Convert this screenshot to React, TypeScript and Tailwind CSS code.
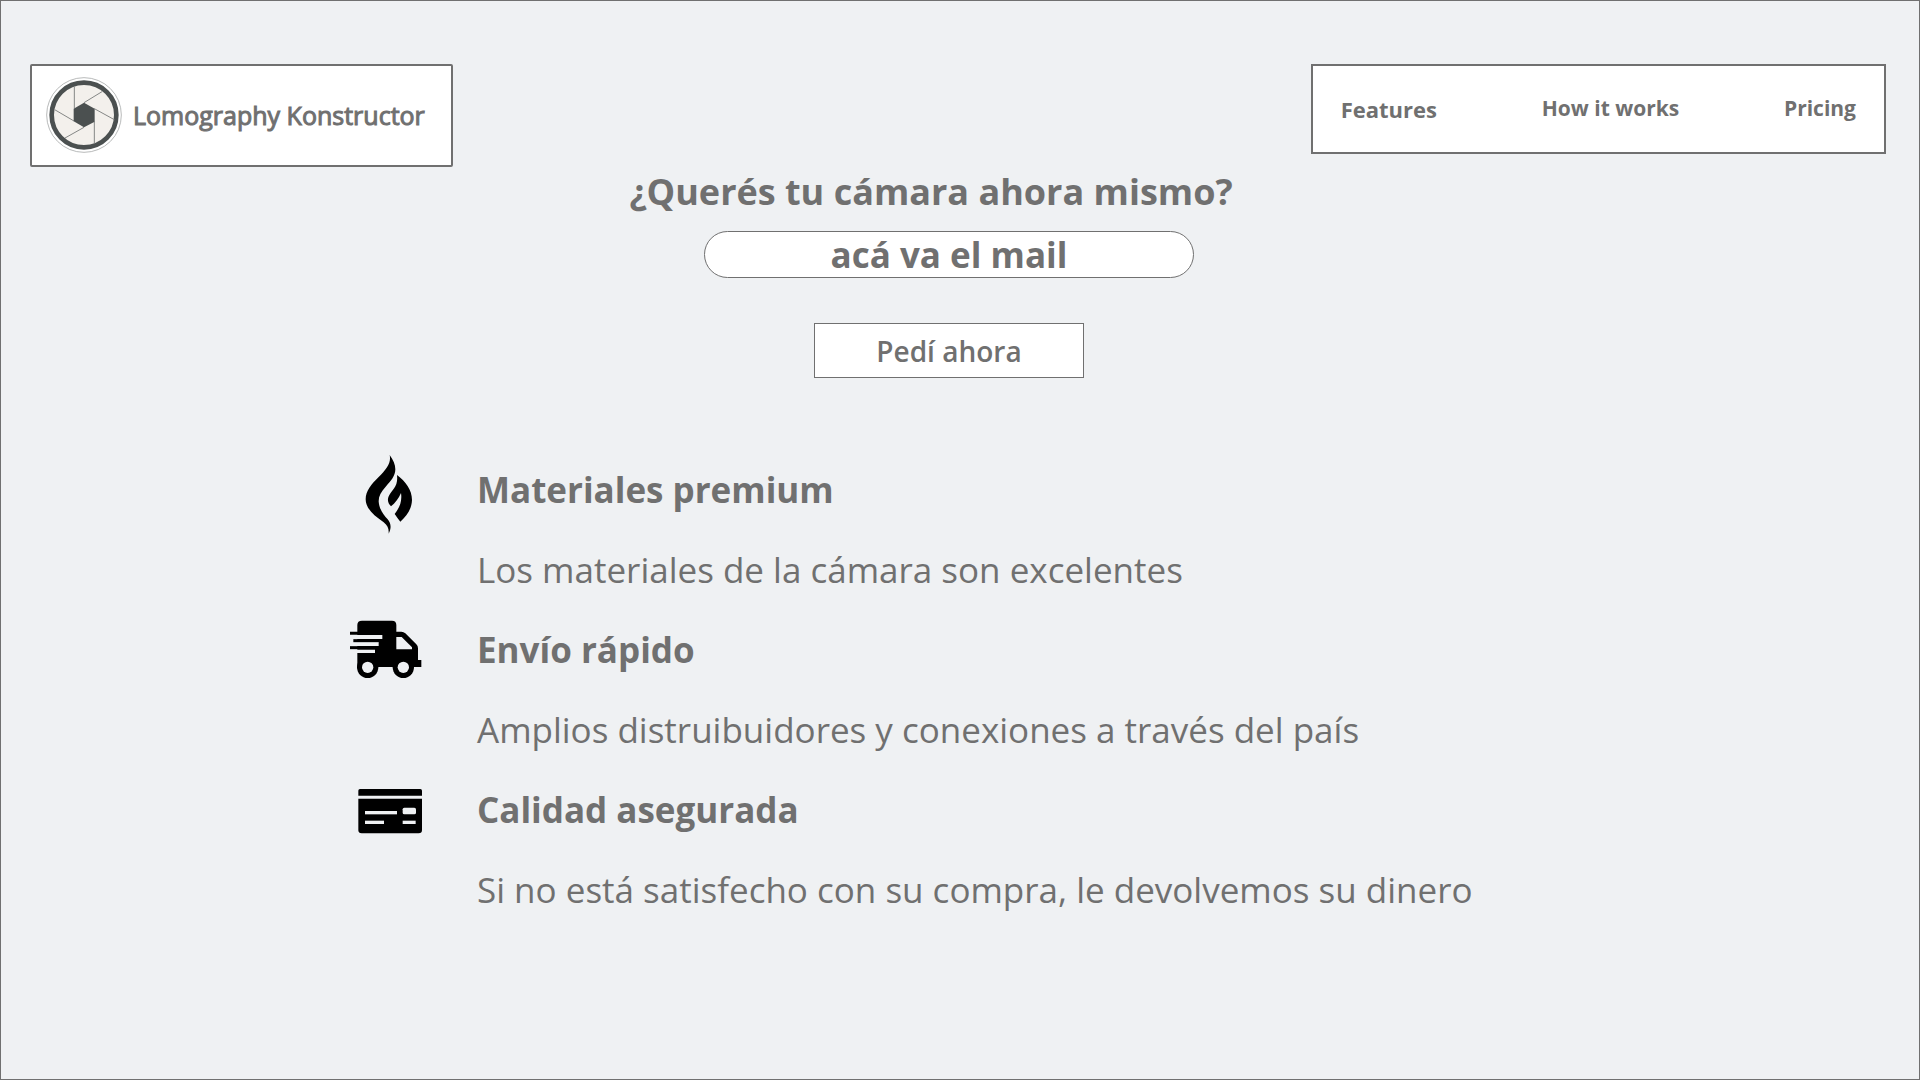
import React from "react";

function ShutterLogo() {
  return (
    <svg viewBox="0 0 228 228" className="size-[76px] shrink-0" aria-hidden="true">
      <circle cx="114" cy="114" r="112" fill="#fff" stroke="#a9acac" strokeWidth="2.5" />
      <circle cx="114" cy="114" r="97" fill="#f3f0ec" stroke="#4b5050" strokeWidth="14" />
      <g stroke="#858786" strokeWidth="3" fill="none">
        <path d="M85 94V29" />
        <path d="M114 77L168 44" />
        <path d="M145 95L205 128" />
        <path d="M145 134V199" />
        <path d="M114 151L57 183" />
        <path d="M84 132L26 98" />
      </g>
      <path d="M114 77L146 95V134L114 151L83 133V95Z" fill="#4b5050" />
    </svg>
  );
}

function FlameIcon() {
  return (
    <svg viewBox="15 30 240 264" className="h-[88px] w-20" aria-hidden="true">
      <path d="M149 45C160 60 166 74 166 88C166 108 152 124 137 140C123 155 116 168 116 184C117 207 131 225 143 238C153 250 155 264 146 281C147 266 143 257 131 247C102 226 77 206 77 178C77 152 94 133 116 111C141 86 154 68 149 45Z" />
      <path d="M171 105C196 124 216 149 216 180C215 207 201 227 181 245C174 236 168 228 164 222C178 204 187 184 183 159C176 176 165 189 153 199C146 192 143 184 144 176C146 162 162 150 169 132C172 123 172 114 171 105Z" />
    </svg>
  );
}

function TruckIcon() {
  return (
    <svg viewBox="15 30 240 264" className="h-[88px] w-20" aria-hidden="true">
      <path d="M66 62H156Q169 62 169 75V95H184Q191 95 196 100L229 133Q234 138 234 145V180H244V201H52V75Q52 62 66 62Z" />
      <circle cx="83" cy="202" r="32" />
      <circle cx="190" cy="202" r="32" />
      <g stroke="#eff1f3">
        <path d="M45 111H127" strokeWidth="12" />
        <path d="M45 132H116" strokeWidth="12" />
        <path d="M45 154H105" strokeWidth="10" />
      </g>
      <path d="M116 117H127V122H116Z" />
      <g stroke="#000" strokeWidth="9">
        <path d="M30 100H127" />
        <path d="M40 122H116" />
        <path d="M30 143H106" />
      </g>
      <path d="M169 111H185L216 142V148H169Z" fill="#eff1f3" />
      <circle cx="83" cy="202" r="17" fill="#eff1f3" />
      <circle cx="190" cy="202" r="17" fill="#eff1f3" />
    </svg>
  );
}

function CardIcon() {
  return (
    <svg viewBox="15 0 240 264" className="h-[88px] w-20" aria-hidden="true">
      <path d="M60 57H241Q246 57 246 62V77H55V62Q55 57 60 57Z" />
      <path d="M55 86H246V180Q246 190 236 190H65Q55 190 55 180Z" />
      <g fill="#eff1f3">
        <path d="M75 123H171V133H75Z" />
        <path d="M75 152H132V162H75Z" />
        <path d="M188 152H227V162H188Z" />
        <rect x="188" y="113" width="40" height="20" rx="5" />
      </g>
    </svg>
  );
}

const features = [
  { icon: <FlameIcon />, title: "Materiales premium", text: "Los materiales de la cámara son excelentes" },
  { icon: <TruckIcon />, title: "Envío rápido", text: "Amplios distruibuidores y conexiones a través del país" },
  { icon: <CardIcon />, title: "Calidad asegurada", text: "Si no está satisfecho con su compra, le devolvemos su dinero" },
];

export default function App() {
  return (
    <div className="min-h-screen border border-[#707070] bg-[#eff1f3] font-['Open_Sans',sans-serif] text-[#707070]">
      <header className="flex items-start justify-between pt-[63px] pr-[33px] pl-[29px]">
        <a
          href="#"
          className="flex items-center gap-[11px] rounded-[2px] border-2 border-[#707070] bg-white pt-[11px] pr-[26px] pb-[12px] pl-[14px]"
        >
          <ShutterLogo />
          <span className="text-[25px] leading-9 whitespace-nowrap [-webkit-text-stroke:1px_#707070]">
            Lomography Konstructor
          </span>
        </a>
        <nav className="flex h-[90px] w-[31%] items-center justify-between border-2 border-[#707070] bg-white px-7 font-bold whitespace-nowrap">
          <a href="#features" className="text-[22px]">Features</a>
          <a href="#how" className="text-[21px]">How it works</a>
          <a href="#pricing" className="text-[21px]">Pricing</a>
        </nav>
      </header>

      <main>
        <form className="flex flex-col items-center pr-[22px]" onSubmit={(e) => e.preventDefault()}>
          <label htmlFor="email" className="pr-9 text-4xl leading-[50px] font-bold">
            ¿Querés tu cámara ahora mismo?
          </label>
          <input
            id="email"
            type="email"
            placeholder="acá va el mail"
            className="mt-3.5 h-[47px] w-[490px] rounded-full border border-[#707070] bg-white text-center text-[35px] leading-[45px] font-bold placeholder:text-[#707070] placeholder:opacity-100"
          />
          <button
            type="submit"
            className="mt-[45px] h-[55px] w-[270px] border border-[#707070] bg-white text-[28px] font-semibold"
          >
            Pedí ahora
          </button>
        </form>

        <ul id="features" className="mx-auto mt-[72px] max-w-[1230px]">
          {features.map((f) => (
            <li key={f.title} className="flex items-start gap-[52px]">
              <div className="shrink-0">{f.icon}</div>
              <div className="text-[35px] leading-[80px]">
                <h2 className="font-bold">{f.title}</h2>
                <p>{f.text}</p>
              </div>
            </li>
          ))}
        </ul>
      </main>
    </div>
  );
}
